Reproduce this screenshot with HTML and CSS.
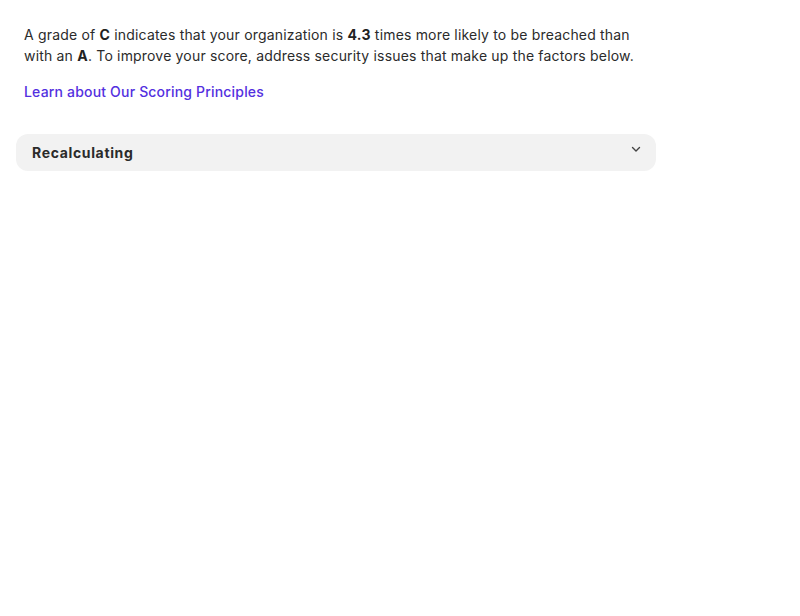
FILE: index.html
```html
<!DOCTYPE html>
<html>
<head>
<meta charset="utf-8">
<link rel="stylesheet" href="styles.css">
</head>
<body>
<main class="panel">
  <p class="summary">A grade of <b>C</b> indicates that your organization is <b>4.3</b> times more likely to be breached than with an <b>A</b>. To improve your score, address security issues that make up the factors below.</p>
  <a class="learn" href="#">Learn about Our Scoring Principles</a>
  <div class="accordion">
    <span class="acc-title">Recalculating</span>
    <svg class="chevron" width="12" height="12" viewBox="0 0 12 12"><path d="M2.5 4.5 L6 8 L9.5 4.5" fill="none" stroke="#444" stroke-width="1.4" stroke-linecap="round" stroke-linejoin="round"/></svg>
  </div>
</main>
</body>
</html>
```
FILE: styles.css
```css
html, body { margin: 0; background: #fff; }
body { font-family: Inter, "Noto Sans", sans-serif; color: #2b2b2b; font-size: 14px; line-height: 21px; letter-spacing: 0.18px; }
.panel { width: 640px; padding: 24px 16px; display: flex; flex-direction: column; }
.summary { margin: 0 8px; }
.summary b { font-weight: 700; color: #222; letter-spacing: 0.3px; }
.learn { margin: 15px 8px 0; color: #5330e0; text-decoration: none; font-weight: 500; align-self: flex-start; }
.accordion { margin-top: 32px; background: #f2f2f2; border-radius: 12px; height: 37px; padding: 0 14px 0 16px; display: flex; align-items: center; justify-content: space-between; }
.acc-title { font-weight: 700; color: #2b2b2b; letter-spacing: 0.65px; }
.chevron { margin-top: -7px; }
```
